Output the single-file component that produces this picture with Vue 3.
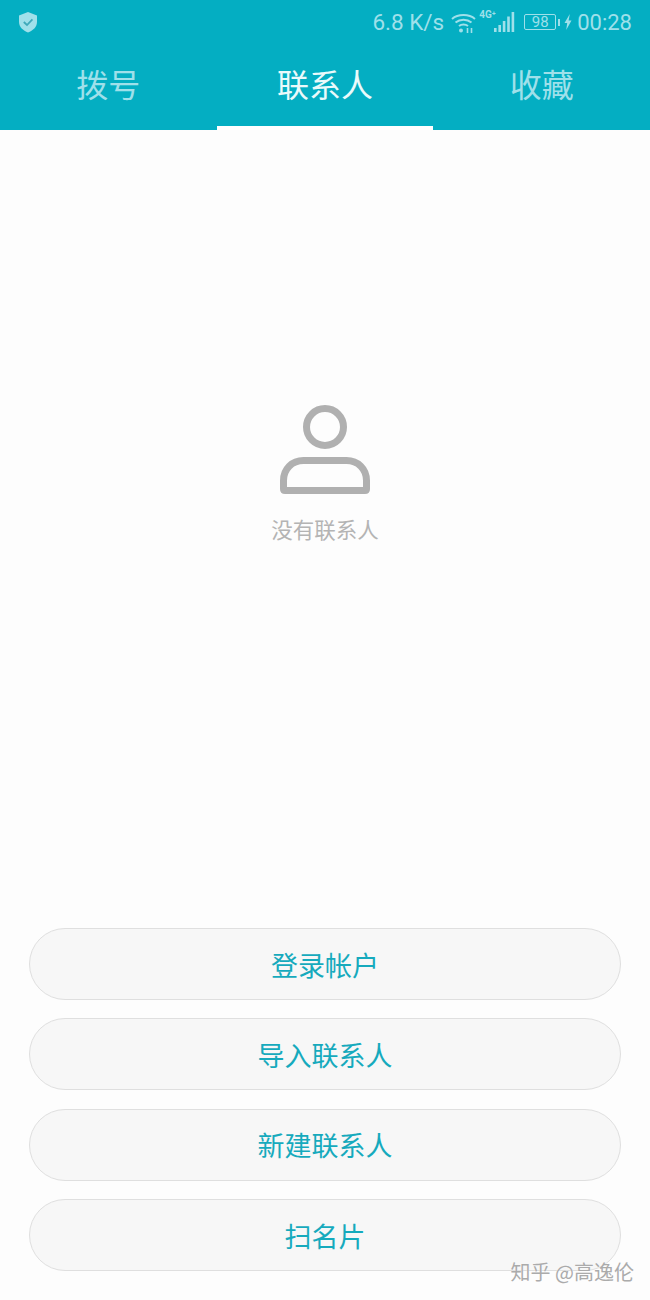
<script setup>
const tabs = [
  { label: '拨号' },
  { label: '联系人', active: true },
  { label: '收藏' },
]
const actions = ['登录帐户', '导入联系人', '新建联系人', '扫名片']
</script>

<template>
  <div class="page">
    <header class="top">
      <div class="status">
        <svg class="shield" width="20" height="22" viewBox="0 0 20 22">
          <path d="M10 1 L19 4.5 V11 C19 16 15 19.5 10 21.5 C5 19.5 1 16 1 11 V4.5 Z" fill="#9fe0ea" />
          <path d="M5.8 11 L9 14 L14.4 8.4" fill="none" stroke="#3fa9ba" stroke-width="1.8" />
        </svg>
        <div class="status-right">
          <span class="speed">6.8 K/s</span>
          <svg class="wifi" width="25" height="20" viewBox="0 0 25 20" fill="none" stroke="#9fe0ea" stroke-width="2">
            <path d="M1 6 C7 0.8 18 0.8 24 6" />
            <path d="M4.5 9.5 C9 5.8 16 5.8 20.5 9.5" />
            <path d="M8 13 C10.5 11 14.5 11 17 13" />
            <circle cx="10" cy="17.5" r="2" fill="#9fe0ea" stroke="none" />
            <path d="M16.5 15 V20 M20.5 15 V20" stroke-width="1.6" />
          </svg>
          <span class="net">
            <span class="net-label">4G⁺</span>
            <svg width="21" height="20" viewBox="0 0 21 20" fill="#9fe0ea">
              <rect x="0" y="16" width="2.6" height="4" />
              <rect x="4.4" y="13" width="2.6" height="7" />
              <rect x="8.8" y="9" width="2.6" height="11" />
              <rect x="13.2" y="4.5" width="2.6" height="15.5" />
              <rect x="17.6" y="0" width="2.6" height="20" />
            </svg>
          </span>
          <span class="battery">98</span>
          <span class="battery-tip"></span>
          <svg class="bolt" width="8" height="16" viewBox="0 0 8 16">
            <path d="M5.8 0 L0.5 9 H3.2 L2.2 16 L7.5 6.5 H4.6 Z" fill="#9fe0ea" />
          </svg>
          <span class="clock">00:28</span>
        </div>
      </div>
      <nav class="tabs">
        <div v-for="tab in tabs" :key="tab.label" class="tab" :class="{ active: tab.active }">
          {{ tab.label }}
        </div>
      </nav>
    </header>

    <main class="empty">
      <svg class="person" width="92" height="92" viewBox="0 0 92 92" fill="none" stroke="#b0b0b0" stroke-width="7">
        <circle cx="46" cy="23" r="18.5" />
        <path d="M4.5 85 V76.5 C4.5 65 13 56.5 24.5 56.5 H67.5 C79 56.5 87.5 65 87.5 76.5 V85 Q87.5 86.5 86 86.5 H6 Q4.5 86.5 4.5 85 Z" stroke-linejoin="round" />
      </svg>
      <p class="empty-text">没有联系人</p>
    </main>

    <section class="actions">
      <button v-for="item in actions" :key="item" class="action" type="button">{{ item }}</button>
    </section>

    <div class="mark">知乎 @高逸伦</div>
  </div>
</template>

<style>
body {
  background: #fdfdfd;
}
</style>

<style scoped>
.page {
  position: relative;
  width: 650px;
  height: 1300px;
  display: flex;
  flex-direction: column;
  background: #fdfdfd;
  font-family: "Noto Sans CJK SC", "Noto Sans", sans-serif;
  overflow: hidden;
}

.top {
  height: 130px;
  flex: none;
  background: #04aec2;
}

.status {
  height: 44px;
  display: flex;
  align-items: center;
  justify-content: space-between;
  padding: 0 18px;
}

.status-right {
  display: flex;
  align-items: center;
  color: #9fe0ea;
  font-family: Roboto, sans-serif;
  font-size: 22px;
}

.speed {
  font-size: 22.5px;
  margin-right: 7px;
}

.wifi {
  margin-top: 1px;
}

.net {
  position: relative;
  display: flex;
  justify-content: flex-end;
  align-items: center;
  width: 39px;
  margin-right: 9px;
}

.net-label {
  position: absolute;
  left: 3px;
  top: -3px;
  font-size: 10px;
  font-weight: 700;
  white-space: nowrap;
}

.battery {
  width: 32px;
  height: 16px;
  box-sizing: border-box;
  border: 1px solid #9fe0ea;
  border-radius: 2px;
  font-size: 15px;
  line-height: 15px;
  text-align: center;
}

.battery-tip {
  width: 2px;
  height: 7px;
  margin-left: 2px;
  background: #9fe0ea;
}

.bolt {
  margin: 0 5px 0 4px;
}

.tabs {
  height: 86px;
  display: flex;
}

.tab {
  flex: 1;
  box-sizing: border-box;
  padding-top: 19px;
  text-align: center;
  color: #9fe0ea;
  font-size: 32px;
  line-height: 40px;
}

.tab.active {
  color: #eafafb;
  border-bottom: 4px solid #fff;
}

.empty {
  display: flex;
  flex-direction: column;
  align-items: center;
  padding-top: 274px;
}

.person {
  display: block;
}

.empty-text {
  margin: 17px 0 0;
  color: #b4b4b4;
  font-size: 21.5px;
  line-height: 32px;
}

.actions {
  position: absolute;
  left: 29px;
  right: 29px;
  bottom: 29px;
  display: flex;
  flex-direction: column;
  gap: 18.3px;
}

.action {
  height: 72px;
  border: 1px solid #dfdfdf;
  border-radius: 36px;
  background: #f7f7f7;
  color: #16aabd;
  font-family: inherit;
  font-size: 27px;
  padding: 0;
}

.mark {
  position: absolute;
  right: 16px;
  bottom: 14px;
  color: #ababab;
  font-size: 20px;
  line-height: 28px;
  text-shadow: 0 0 1px #fff;
}
</style>
